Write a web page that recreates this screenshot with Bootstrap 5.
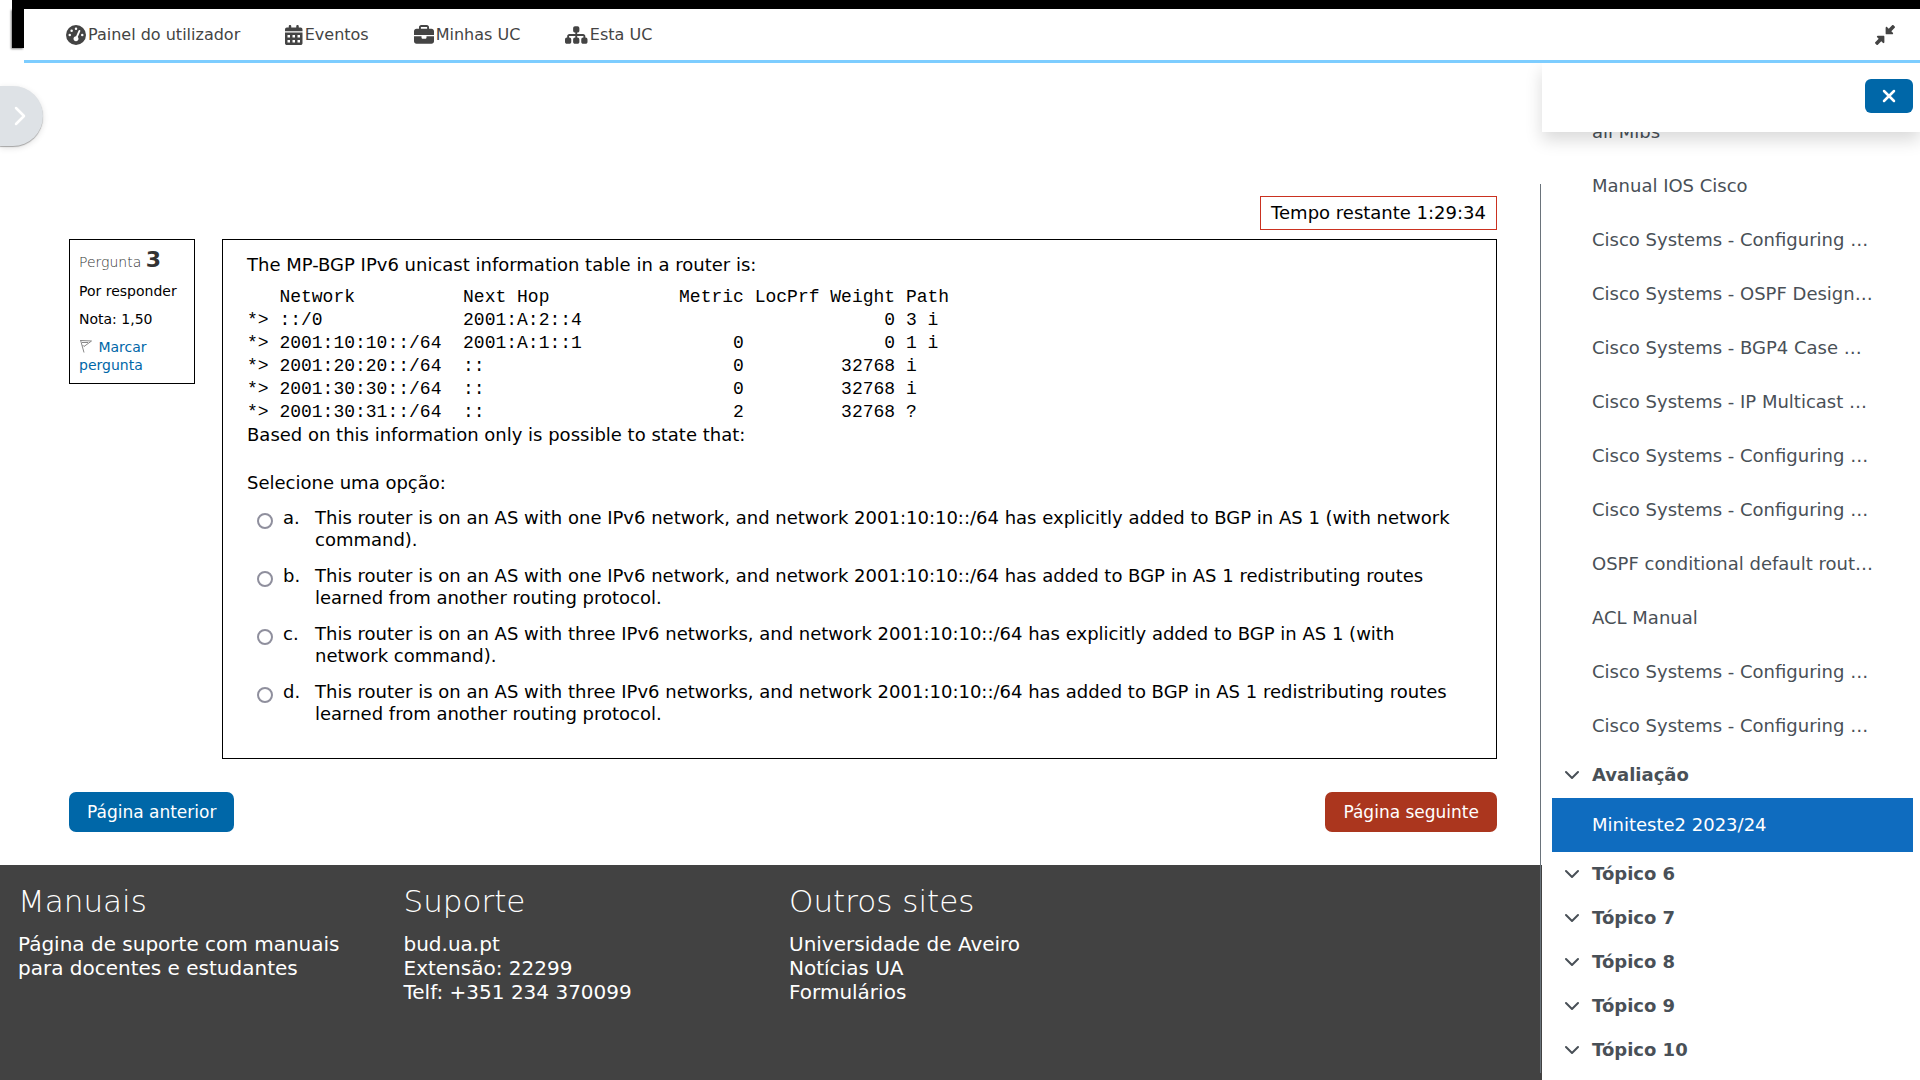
<!DOCTYPE html>
<html lang="pt">
<head>
<meta charset="utf-8">
<meta name="viewport" content="width=device-width, initial-scale=1">
<title>Miniteste2 2023/24</title>
<link href="https://cdn.jsdelivr.net/npm/bootstrap@5.3.0/dist/css/bootstrap.min.css" rel="stylesheet">
<style>
body { font-family: "DejaVu Sans", sans-serif; font-size: 18px; line-height: 22px; color: #000; background: #fff; }
a { text-decoration: none; }
.icon { height: 20px; fill: currentColor; display: block; }

/* Top bar */
.site-head { padding-left: 12px; }
.site-strip { background: #000; height: 9px; }
.site-tab { background: #000; width: 12px; height: 39px; box-shadow: -1px 1px 2px rgba(0,0,0,.5); }
.site-nav { background: #fff; border-bottom: 3px solid #7dcdff; padding: 0 25px 0 42px; height: 54px; font-size: 16px; z-index: 3; }
.site-nav ul { gap: 45px; }
.site-nav a { gap: 2px; }
.site-nav a, .site-nav button { color: #444; }

/* Quiz area */
.quiz-pane { min-width: 0; }
.quiz-pane::before { content: ""; position: absolute; top: 121px; right: 1px; bottom: 7px; width: 1px; background: #6a737b; }
.quiz-body { padding: 133px 45px 33px 69px; }
.timer { border: 1px solid #ca3120; padding: 5px 10px; margin-bottom: 9px; }
.q-row { gap: 27px; }
.q-info { width: 126px; border: 1px solid #000; padding: 7px 9px 9px; font-size: 14px; line-height: 18px; }
.q-info h3 { font-size: 14px; font-weight: 200; line-height: 26px; color: #333; margin-bottom: 7px; }
.q-info h3 strong { font-size: 22px; font-weight: 700; }
.q-info p { margin-bottom: 10px; }
.q-info a { color: #0067a8; }
.flag { width: 14px; height: 14px; fill: none; stroke: #888; vertical-align: -1px; margin-right: 1px; }
.q-text { border: 1px solid #000; padding: 14px 24px 33px; min-width: 0; }
.q-text pre { font-family: "Liberation Mono", monospace; font-size: 18px; line-height: 23px; color: #000; margin: 10px 0 0; }
.q-text fieldset { margin-top: 26px; }
.q-text legend { font-size: 18px; line-height: 22px; margin-bottom: 13px; }
.answers { gap: 14px; padding: 0 10px; }
.answers input { appearance: none; width: 16px; height: 16px; border: 2px solid #8f8f9d; border-radius: 50%; margin: 6px 0 0; background: #fff; }
.answers input:checked { background: #0067a8; box-shadow: inset 0 0 0 2px #fff; }
.answers label { margin-left: 10px; }
.answers .letter { width: 32px; }
.quiz-nav { margin-top: 33px; }
.btn-page { font-size: 17px; line-height: 24px; padding: 7px 17px; color: #fff; border-radius: 7px; }
.btn-prev, .btn-prev:hover { background: #0067a8; color: #fff; }
.btn-next, .btn-next:hover { background: #ab361e; color: #fff; }

/* Footer */
.site-foot { background: #424242; color: #fff; font-size: 20px; line-height: 24px; padding-top: 18px; }
.site-foot .row > div { padding: 0 18px; }
.site-foot h2 { font-size: 31px; font-weight: 200; line-height: 36px; margin-bottom: 13px; }
.site-foot a { color: #fff; display: block; }

/* Left drawer toggle */
.drawer-open { top: 86px; left: 0; width: 43px; height: 60px; border: 0; border-radius: 0 30px 30px 0; background: #dee2e6; box-shadow: 0 1px 1px rgba(0,0,0,.3), 0 2px 6px rgba(0,0,0,.12); padding: 0 0 0 14px; }

/* Course index */
.course-index { width: 378px; color: #495057; }
.index-head { height: 69px; padding: 16px 7px 0 0; background: #fff; box-shadow: 0 8px 16px rgba(0,0,0,.15); z-index: 2; }
.btn-shut { width: 48px; height: 34px; background: #0067a8; border: 0; border-radius: 6px; color: #fff; }
.index-list { padding: 0 7px 8px 10px; min-height: 0; }
.index-list a { color: #495057; }
.index-item { padding: 13px 0 13px 40px; line-height: 28px; flex: none; white-space: nowrap; }
.index-list .index-item.active { background: #0f6cbf; color: #fff; margin-top: 1px; }
.index-topic { height: 44px; padding-left: 13px; flex: none; font-weight: 700; }
.index-topic button { width: 27px; color: #495057; }
.chev { fill: none; stroke: currentColor; stroke-width: 2; stroke-linecap: round; stroke-linejoin: round; display: block; }
</style>
<script src="https://cdn.jsdelivr.net/npm/bootstrap@5.3.0/dist/js/bootstrap.bundle.min.js"></script>
</head>
<body class="d-flex flex-column vh-100 overflow-hidden">

<header class="site-head">
  <div class="site-strip"></div>
  <div class="d-flex align-items-start">
    <div class="site-tab"></div>
    <nav class="site-nav d-flex align-items-center justify-content-between flex-fill position-relative">
      <ul class="list-unstyled d-flex mb-0">
        <li><a href="#" class="d-flex align-items-center"><svg class="icon" viewBox="0 0 512 512"><path d="M0 256a256 256 0 1 1 512 0A256 256 0 1 1 0 256zM288 96a32 32 0 1 0 -64 0 32 32 0 1 0 64 0zM256 416c35.300 0 64-28.700 64-64c0-17.400-6.900-33.100-18.100-44.600L366 161.700c5.300-12.100-.2-26.300-12.300-31.600s-26.300 .2-31.600 12.300L257.900 288c-.6 0-1.300 0-1.900 0c-35.300 0-64 28.700-64 64s28.700 64 64 64zM176 144a32 32 0 1 0 -64 0 32 32 0 1 0 64 0zM96 288a32 32 0 1 0 0-64 32 32 0 1 0 0 64zm352-32a32 32 0 1 0 -64 0 32 32 0 1 0 64 0z"/></svg><span>Painel do utilizador</span></a></li>
        <li><a href="#" class="d-flex align-items-center"><svg class="icon" viewBox="0 0 448 512"><path fill-rule="evenodd" d="M128 0c17.700 0 32 14.300 32 32V64H288V32c0-17.700 14.300-32 32-32s32 14.300 32 32V64h48c26.500 0 48 21.500 48 48v48H0V112C0 85.500 21.500 64 48 64H96V32c0-17.700 14.300-32 32-32zM0 192H448V464c0 26.500-21.500 48-48 48H48c-26.500 0-48-21.500-48-48zM64 256v64h64v-64zM192 256v64h64v-64zM320 256v64h64v-64zM64 384v64h64v-64zM192 384v64h64v-64zM320 384v64h64v-64z"/></svg><span>Eventos</span></a></li>
        <li><a href="#" class="d-flex align-items-center"><svg class="icon" viewBox="0 0 512 512"><path d="M184 48H328c4.400 0 8 3.600 8 8V96H176V56c0-4.400 3.600-8 8-8zm-56 8V96H64C28.700 96 0 124.700 0 160v96H512V160c0-35.300-28.700-64-64-64H384V56c0-30.900-25.100-56-56-56H184c-30.900 0-56 25.100-56 56zM512 288H320v32c0 17.700-14.300 32-32 32H224c-17.700 0-32-14.300-32-32V288H0V416c0 35.300 28.700 64 64 64H448c35.300 0 64-28.700 64-64V288z"/></svg><span>Minhas UC</span></a></li>
        <li><a href="#" class="d-flex align-items-center"><svg class="icon" viewBox="0 0 576 512"><path d="M208 80c0-26.500 21.500-48 48-48h64c26.500 0 48 21.500 48 48v64c0 26.500-21.500 48-48 48h-8v40H464c30.900 0 56 25.100 56 56v32h8c26.500 0 48 21.500 48 48v64c0 26.500-21.500 48-48 48H464c-26.500 0-48-21.500-48-48V368c0-26.500 21.500-48 48-48h8V288c0-4.400-3.600-8-8-8H312v40h8c26.500 0 48 21.500 48 48v64c0 26.500-21.500 48-48 48H256c-26.500 0-48-21.500-48-48V368c0-26.500 21.500-48 48-48h8V280H112c-4.400 0-8 3.600-8 8v32h8c26.500 0 48 21.500 48 48v64c0 26.500-21.500 48-48 48H48c-26.500 0-48-21.500-48-48V368c0-26.500 21.500-48 48-48h8V288c0-30.900 25.100-56 56-56H264V192h-8c-26.500 0-48-21.500-48-48V80z"/></svg><span>Esta UC</span></a></li>
      </ul>
      <button type="button" class="border-0 bg-transparent p-0" aria-label="Sair do ecrã completo"><svg class="icon" viewBox="0 0 512 512"><path d="M439 7c9.400-9.400 24.600-9.400 33.900 0l32 32c9.400 9.400 9.400 24.600 0 33.900l-87 87 39 39c6.900 6.900 8.900 17.200 5.200 26.200s-12.500 14.800-22.200 14.800H296c-13.300 0-24-10.700-24-24V72c0-9.700 5.800-18.500 14.800-22.200s19.300-1.700 26.200 5.200l39 39L439 7zM72 272H216c13.300 0 24 10.700 24 24V440c0 9.700-5.800 18.500-14.800 22.200s-19.300 1.700-26.200-5.200l-39-39L73 505c-9.400 9.400-24.600 9.400-33.900 0L7 473c-9.400-9.400-9.400-24.600 0-33.900l87-87L55 313c-6.900-6.900-8.900-17.200-5.200-26.200s12.500-14.800 22.200-14.800z"/></svg></button>
    </nav>
  </div>
</header>

<div class="d-flex flex-fill overflow-hidden">
  <div class="quiz-pane d-flex flex-column flex-fill position-relative">
    <main class="quiz-body">
      <div class="d-flex justify-content-end"><div class="timer" role="timer">Tempo restante 1:29:34</div></div>
      <div class="q-row d-flex align-items-start">
        <div class="q-info flex-shrink-0">
          <h3>Pergunta <strong>3</strong></h3>
          <p>Por responder</p>
          <p>Nota: 1,50</p>
          <a href="#"><svg class="flag" viewBox="0 0 14 14"><path d="M1.500 1L5 13.500M1.500 1.500L12.500 2L5 7.500L3.500 6M3 3.500L9 3.500"/></svg> Marcar pergunta</a>
        </div>
        <div class="q-text flex-fill">
          <p class="mb-0">The MP-BGP IPv6 unicast information table in a router is:</p>
<pre>
   Network          Next Hop            Metric LocPrf Weight Path
*&gt; ::/0             2001:A:2::4                            0 3 i
*&gt; 2001:10:10::/64  2001:A:1::1              0             0 1 i
*&gt; 2001:20:20::/64  ::                       0         32768 i
*&gt; 2001:30:30::/64  ::                       0         32768 i
*&gt; 2001:30:31::/64  ::                       2         32768 ?</pre>
          <p class="mb-0">Based on this information only is possible to state that:</p>
          <fieldset>
            <legend>Selecione uma opção:</legend>
            <div class="answers d-flex flex-column">
              <div class="d-flex align-items-start"><input class="flex-shrink-0" type="radio" name="resp" id="opt-a"><label class="d-flex" for="opt-a"><span class="letter flex-shrink-0">a.</span><span>This router is on an AS with one IPv6 network, and network 2001:10:10::/64 has explicitly added to BGP in AS 1 (with network command).</span></label></div>
              <div class="d-flex align-items-start"><input class="flex-shrink-0" type="radio" name="resp" id="opt-b"><label class="d-flex" for="opt-b"><span class="letter flex-shrink-0">b.</span><span>This router is on an AS with one IPv6 network, and network 2001:10:10::/64 has added to BGP in AS 1 redistributing routes learned from another routing protocol.</span></label></div>
              <div class="d-flex align-items-start"><input class="flex-shrink-0" type="radio" name="resp" id="opt-c"><label class="d-flex" for="opt-c"><span class="letter flex-shrink-0">c.</span><span>This router is on an AS with three IPv6 networks, and network 2001:10:10::/64 has explicitly added to BGP in AS 1 (with network command).</span></label></div>
              <div class="d-flex align-items-start"><input class="flex-shrink-0" type="radio" name="resp" id="opt-d"><label class="d-flex" for="opt-d"><span class="letter flex-shrink-0">d.</span><span>This router is on an AS with three IPv6 networks, and network 2001:10:10::/64 has added to BGP in AS 1 redistributing routes learned from another routing protocol.</span></label></div>
            </div>
          </fieldset>
        </div>
      </div>
      <div class="quiz-nav d-flex justify-content-between">
        <button type="button" class="btn btn-page btn-prev">Página anterior</button>
        <button type="button" class="btn btn-page btn-next">Página seguinte</button>
      </div>
    </main>
    <footer class="site-foot flex-fill">
      <div class="row g-0">
        <div class="col-3"><h2>Manuais</h2><a href="#">Página de suporte com manuais para docentes e estudantes</a></div>
        <div class="col-3"><h2>Suporte</h2><a href="#">bud.ua.pt</a><div>Extensão: 22299</div><div>Telf: +351 234 370099</div></div>
        <div class="col-3"><h2>Outros sites</h2><a href="#">Universidade de Aveiro</a><a href="#">Notícias UA</a><a href="#">Formulários</a></div>
      </div>
    </footer>
  </div>

  <aside class="course-index d-flex flex-column flex-shrink-0">
    <div class="index-head d-flex justify-content-end align-items-start flex-shrink-0 position-relative">
      <button type="button" class="btn-shut d-flex align-items-center justify-content-center p-0" aria-label="Fechar índice"><svg class="chev" width="14" height="14" viewBox="0 0 14 14"><path stroke-width="2.500" d="M2 2L12 12M12 2L2 12"/></svg></button>
    </div>
    <nav class="index-list d-flex flex-column justify-content-end flex-fill overflow-hidden">
      <a href="#" class="index-item">all Mibs</a>
      <a href="#" class="index-item">Manual IOS Cisco</a>
      <a href="#" class="index-item">Cisco Systems - Configuring …</a>
      <a href="#" class="index-item">Cisco Systems - OSPF Design…</a>
      <a href="#" class="index-item">Cisco Systems - BGP4 Case …</a>
      <a href="#" class="index-item">Cisco Systems - IP Multicast …</a>
      <a href="#" class="index-item">Cisco Systems - Configuring …</a>
      <a href="#" class="index-item">Cisco Systems - Configuring …</a>
      <a href="#" class="index-item">OSPF conditional default rout…</a>
      <a href="#" class="index-item">ACL Manual</a>
      <a href="#" class="index-item">Cisco Systems - Configuring …</a>
      <a href="#" class="index-item">Cisco Systems - Configuring …</a>
      <div class="index-topic d-flex align-items-center"><button type="button" class="border-0 bg-transparent p-0" aria-label="Contrair Avaliação"><svg class="chev" width="14" height="10" viewBox="0 0 14 10"><path d="M1 2L7 8L13 2"/></svg></button><a href="#">Avaliação</a></div>
      <a href="#" class="index-item active" aria-current="page">Miniteste2 2023/24</a>
      <div class="index-topic d-flex align-items-center"><button type="button" class="border-0 bg-transparent p-0" aria-label="Contrair Tópico 6"><svg class="chev" width="14" height="10" viewBox="0 0 14 10"><path d="M1 2L7 8L13 2"/></svg></button><a href="#">Tópico 6</a></div>
      <div class="index-topic d-flex align-items-center"><button type="button" class="border-0 bg-transparent p-0" aria-label="Contrair Tópico 7"><svg class="chev" width="14" height="10" viewBox="0 0 14 10"><path d="M1 2L7 8L13 2"/></svg></button><a href="#">Tópico 7</a></div>
      <div class="index-topic d-flex align-items-center"><button type="button" class="border-0 bg-transparent p-0" aria-label="Contrair Tópico 8"><svg class="chev" width="14" height="10" viewBox="0 0 14 10"><path d="M1 2L7 8L13 2"/></svg></button><a href="#">Tópico 8</a></div>
      <div class="index-topic d-flex align-items-center"><button type="button" class="border-0 bg-transparent p-0" aria-label="Contrair Tópico 9"><svg class="chev" width="14" height="10" viewBox="0 0 14 10"><path d="M1 2L7 8L13 2"/></svg></button><a href="#">Tópico 9</a></div>
      <div class="index-topic d-flex align-items-center"><button type="button" class="border-0 bg-transparent p-0" aria-label="Contrair Tópico 10"><svg class="chev" width="14" height="10" viewBox="0 0 14 10"><path d="M1 2L7 8L13 2"/></svg></button><a href="#">Tópico 10</a></div>
    </nav>
  </aside>
</div>

<button type="button" class="drawer-open position-absolute" aria-label="Abrir gaveta"><svg class="chev text-white" width="12" height="20" viewBox="0 0 12 20"><path stroke-width="2.500" d="M2 2L10 10L2 18"/></svg></button>
</body>
</html>
